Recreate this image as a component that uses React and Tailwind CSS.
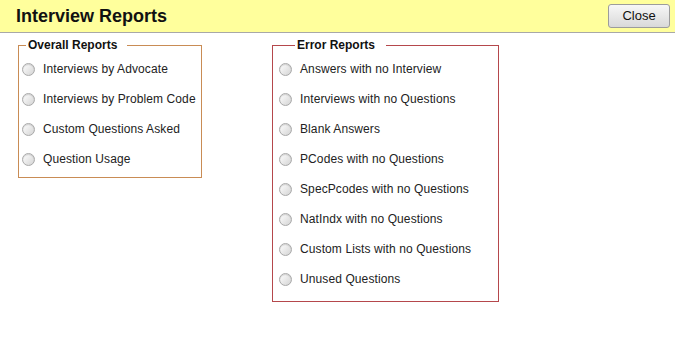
import React, { useState } from 'react';

const overall = [
    'Interviews by Advocate',
    'Interviews by Problem Code',
    'Custom Questions Asked',
    'Question Usage',
];

const errors = [
    'Answers with no Interview',
    'Interviews with no Questions',
    'Blank Answers',
    'PCodes with no Questions',
    'SpecPcodes with no Questions',
    'NatIndx with no Questions',
    'Custom Lists with no Questions',
    'Unused Questions',
];

const Radio = ({ checked }) => (
    <span className="w-[13px] h-[13px] rounded-full border border-[#a9a9a9] bg-gradient-to-br from-[#ffffff] to-[#d4d4d4] shadow-[inset_0_1px_1px_rgba(0,0,0,0.15)] flex items-center justify-center shrink-0">
        {checked && <span className="w-[5px] h-[5px] rounded-full bg-[#333]" />}
    </span>
);

const ReportGroup = ({ title, items, selected, onSelect, className, legendClass, listClass }) => (
    <fieldset className={`border ${className}`}>
        <legend className={`font-bold text-[12px] leading-[14px] text-[#111] ${legendClass}`}>{title}</legend>
        <div className={listClass}>
            {items.map(item => (
                <label key={item} onClick={() => onSelect(item)} className="h-[30px] flex items-center cursor-pointer">
                    <Radio checked={selected === item} />
                    <span className="text-[12px] tracking-[0.1px] text-[#222]">{item}</span>
                </label>
            ))}
        </div>
    </fieldset>
);

const App = () => {
    const [selected, setSelected] = useState(null);

    return (
        <div className="w-[675px] h-[344px] bg-white font-['Liberation_Sans',Arial,sans-serif]">
            <div className="h-[33px] bg-[#ffff9c] border-b border-[#a8a8a8] flex items-center justify-between pl-[16px] pr-[5px]">
                <h1 className="text-[18px] font-bold text-[#111] leading-none">Interview Reports</h1>
                <button className="w-[62px] h-[24px] rounded-[3px] border border-[#9c9c9c] bg-gradient-to-b from-[#f7f7f7] to-[#d9d9d9] text-[13px] text-[#111] mt-[-1px]">
                    Close
                </button>
            </div>
            <div className="flex items-start pl-[18px] pt-[5px] gap-[70px]">
                <ReportGroup
                    title="Overall Reports"
                    items={overall}
                    selected={selected}
                    onSelect={setSelected}
                    className="w-[184px] border-[#c98c55] pb-[3px]"
                    legendClass="ml-[7px] pl-[2px] pr-[10px]"
                    listClass="pt-[2px] pl-[3px] [&_label>span:last-child]:ml-[8px]"
                />
                <ReportGroup
                    title="Error Reports"
                    items={errors}
                    selected={selected}
                    onSelect={setSelected}
                    className="w-[227px] border-[#b5484c] pb-[7px]"
                    legendClass="ml-[22px] pl-[2px] pr-[11px]"
                    listClass="pt-[2px] pl-[6px] [&_label>span:last-child]:ml-[8px]"
                />
            </div>
        </div>
    );
};

export default App;
